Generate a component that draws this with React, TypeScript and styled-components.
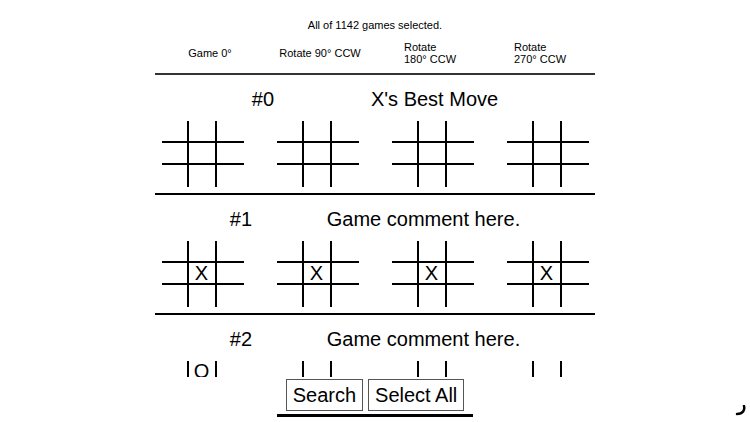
import React from "react";
import styled, { createGlobalStyle } from "styled-components";

const GlobalStyle = createGlobalStyle`
  html, body { margin: 0; padding: 0; background: #fff; }
  body { font-family: "Liberation Sans", Arial, sans-serif; color: #000; }
`;

const Page = styled.div`
  position: relative;
  width: 750px;
  height: 422px;
  overflow: hidden;
  display: flex;
  flex-direction: column;
  align-items: center;
  padding-top: 19px;
  box-sizing: border-box;
`;

const Summary = styled.div`
  font-size: 11px;
  line-height: 12px;
  height: 12px;
`;

const Columns = styled.div`
  margin-top: 5px;
  width: 440px;
  height: 32px;
  padding-bottom: 5px;
  display: grid;
  grid-template-columns: repeat(4, 1fr);
  align-items: center;
  justify-items: center;
  border-bottom: 2px solid #333;
`;

const ColumnLabel = styled.div`
  display: inline-block;
  text-align: left;
  font-size: 11px;
  line-height: 12px;
  margin-top: 2px;
  white-space: pre-line;
`;

const List = styled.div`
  width: 440px;
  height: 302px;
  overflow: hidden;
  flex-shrink: 0;
`;

const GameRow = styled.div`
  box-sizing: border-box;
  height: 120px;
  padding-top: 13px;
  border-bottom: 2px solid #000;
  display: flex;
  flex-direction: column;
`;

const TitleRow = styled.div`
  display: flex;
  justify-content: space-evenly;
  font-size: 20px;
  line-height: 23px;
  height: 23px;
`;

const Boards = styled.div`
  margin-top: 10px;
  display: flex;
  justify-content: center;
  gap: 33px;
`;

const Board = styled.div`
  display: grid;
  grid-template-columns: 27px 28px 27px;
  grid-template-rows: 22px 22px 22px;
`;

const Cell = styled.div<{ $right: boolean; $bottom: boolean }>`
  box-sizing: border-box;
  border-right: ${(p) => (p.$right ? "2px solid #000" : "none")};
  border-bottom: ${(p) => (p.$bottom ? "2px solid #000" : "none")};
  display: flex;
  align-items: center;
  justify-content: center;
  font-size: 20px;
  line-height: 20px;
`;

const Toolbar = styled.div`
  margin-top: 2px;
  display: flex;
  gap: 5px;
  padding: 0 9px 3px;
  border-bottom: 3px solid #000;
`;

const Button = styled.button`
  height: 32px;
  padding: 0 6px;
  border: 1px solid #555;
  background: #fff;
  font-family: "Liberation Sans", Arial, sans-serif;
  font-size: 20px;
  color: #000;
  cursor: pointer;
`;

const Corner = styled.svg`
  position: absolute;
  right: 3px;
  bottom: 5px;
`;

type Mark = "" | "X" | "O";
type Grid = Mark[][];

const rotate = (g: Grid): Grid =>
  [0, 1, 2].map((r) => [0, 1, 2].map((c) => g[c][2 - r]));

const rotations = (g: Grid): Grid[] => {
  const out: Grid[] = [g];
  for (let i = 0; i < 3; i++) out.push(rotate(out[out.length - 1]));
  return out;
};

const games: { id: number; comment: string; grid: Grid }[] = [
  { id: 0, comment: "X's Best Move", grid: [["", "", ""], ["", "", ""], ["", "", ""]] },
  { id: 1, comment: "Game comment here.", grid: [["", "", ""], ["", "X", ""], ["", "", ""]] },
  { id: 2, comment: "Game comment here.", grid: [["", "O", ""], ["", "X", ""], ["", "", ""]] },
];

const labels = ["Game 0°", "Rotate 90° CCW", "Rotate\n180° CCW", "Rotate\n270° CCW"];

const BoardView = ({ grid }: { grid: Grid }) => (
  <Board>
    {grid.map((row, r) =>
      row.map((m, c) => (
        <Cell key={`${r}-${c}`} $right={c < 2} $bottom={r < 2}>
          {m}
        </Cell>
      ))
    )}
  </Board>
);

export default function App() {
  return (
    <Page>
      <GlobalStyle />
      <Summary>All of 1142 games selected.</Summary>
      <Columns>
        {labels.map((l) => (
          <ColumnLabel key={l}>{l}</ColumnLabel>
        ))}
      </Columns>
      <List>
        {games.map((g) => (
          <GameRow key={g.id}>
            <TitleRow>
              <span>#{g.id}</span>
              <span>{g.comment}</span>
            </TitleRow>
            <Boards>
              {rotations(g.grid).map((b, i) => (
                <BoardView key={i} grid={b} />
              ))}
            </Boards>
          </GameRow>
        ))}
      </List>
      <Toolbar>
        <Button>Search</Button>
        <Button>Select All</Button>
      </Toolbar>
      <Corner width="12" height="12" viewBox="0 0 12 12">
        <path d="M9 1 C10 5 8 9 2 9" fill="none" stroke="#000" strokeWidth="2.5" strokeLinecap="round" />
      </Corner>
    </Page>
  );
}
